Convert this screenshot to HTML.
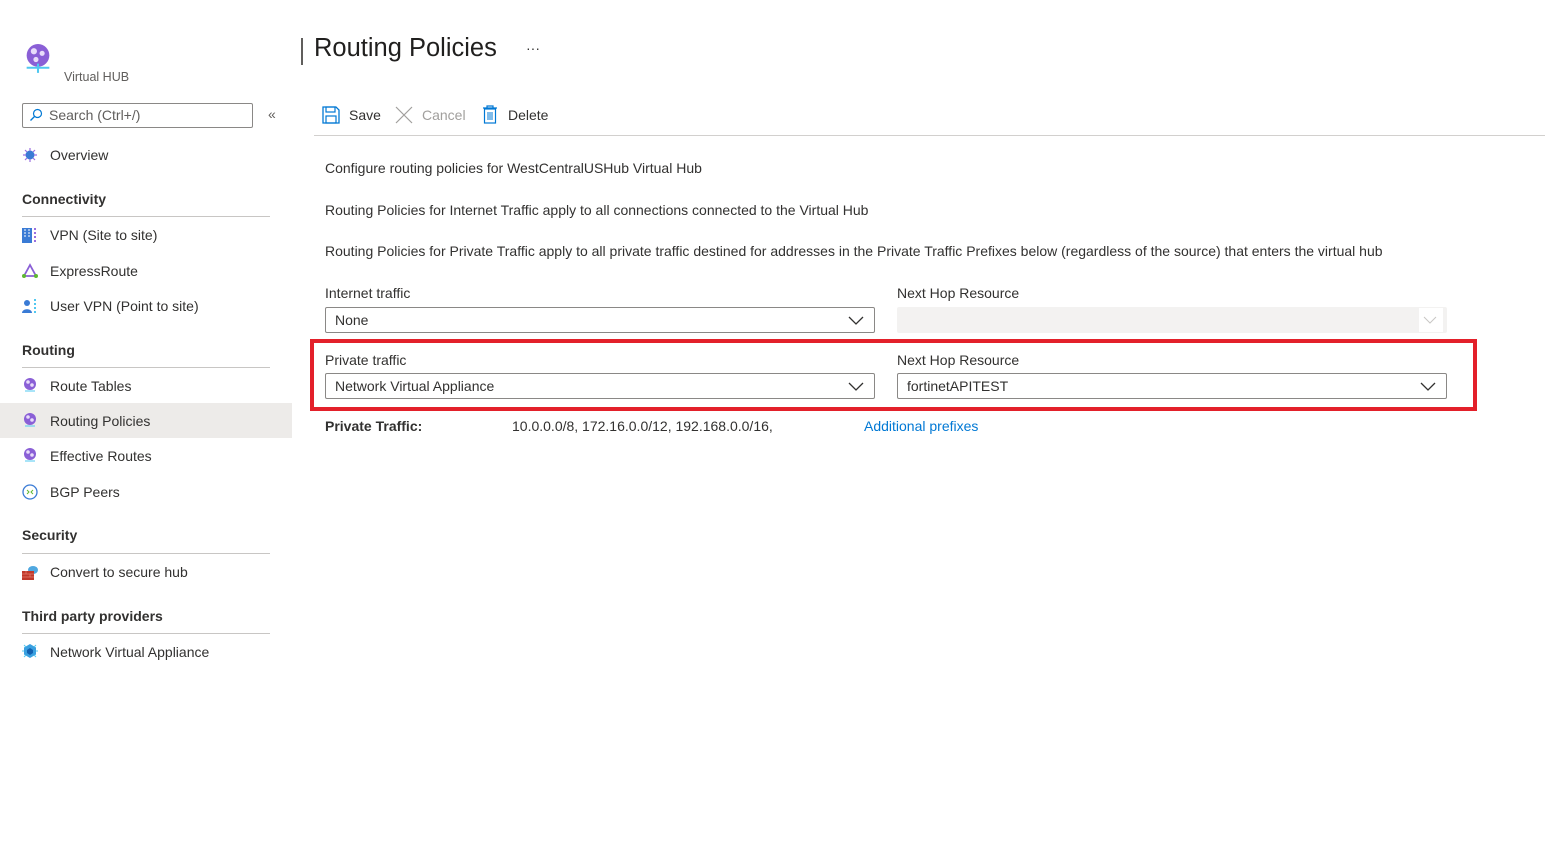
<!DOCTYPE html>
<html><head><meta charset="utf-8"><style>
*{box-sizing:border-box;margin:0;padding:0}
body{width:1545px;height:864px;background:#fff;font-family:"Liberation Sans",sans-serif;font-size:14px;color:#323130;position:relative;overflow:hidden}
.a{position:absolute;white-space:nowrap}
.hdr{font-weight:bold;font-size:14px}
.line{position:absolute;left:22px;width:248px;height:1px;background:#c8c6c4}
.ico{position:absolute;width:16px;height:16px}
.sel{position:absolute;height:26px;border:1px solid #8a8886;border-radius:2px;padding:5px 9px;font-size:14px}
.chev{position:absolute;right:10px;top:6px}
</style></head><body>
<svg class="a" style="left:23px;top:43px" width="30" height="33" viewBox="0 0 28 32"><circle cx="14" cy="12" r="11" fill="#8a5fd6"/><circle cx="10" cy="8" r="3" fill="#e8dcfa"/><circle cx="18" cy="10" r="2.5" fill="#e8dcfa"/><circle cx="12" cy="16" r="2.5" fill="#e8dcfa"/><path d="M3 24h22M14 20v9" stroke="#50c8f0" stroke-width="2"/></svg>
<div class="a" style="left:64px;top:70px;font-size:12.5px;color:#605e5c">Virtual HUB</div>
<div class="a" style="left:22px;top:103px;width:231px;height:25px;border:1px solid #8a8886;border-radius:2px"></div>
<svg class="a" style="left:29px;top:108px" width="14" height="14" viewBox="0 0 14 14"><circle cx="8.5" cy="5.5" r="4" fill="none" stroke="#0078d4" stroke-width="1.2"/><path d="M5.5 8.5L1.5 12.5" stroke="#0078d4" stroke-width="1.3"/></svg>
<div class="a" style="left:49px;top:107px;color:#605e5c">Search (Ctrl+/)</div>
<div class="a" style="left:268px;top:106px;color:#605e5c;font-size:14px">«</div>

<svg class="ico" style="left:22px;top:147px" viewBox="0 0 16 16"><circle cx="8" cy="8" r="4.5" fill="#3a7bd5"/><path d="M1 8h3M12 8h3M8 1v3M8 12v3M3 3l2 2M11 11l2 2M13 3l-2 2M3 13l2-2" stroke="#9a6fe0" stroke-width="1.2"/></svg>
<div class="a" style="left:50px;top:147px">Overview</div>
<div class="a hdr" style="left:22px;top:191px">Connectivity</div><div class="line" style="top:216px"></div>
<svg class="ico" style="left:22px;top:227px" viewBox="0 0 16 16"><rect x="0" y="1" width="10" height="15" fill="#3a7bd5"/><path d="M2 3h2M6 3h2M2 6h2M6 6h2M2 9h2M6 9h2" stroke="#fff"/><path d="M13 1v15" stroke="#9a6fe0" stroke-dasharray="2 2" stroke-width="2"/></svg>
<div class="a" style="left:50px;top:227px">VPN (Site to site)</div>
<svg class="ico" style="left:22px;top:263px" viewBox="0 0 16 16"><path d="M8 2L2 13h12z" fill="none" stroke="#8a5fd6" stroke-width="1.8"/><circle cx="2" cy="13" r="2" fill="#5fb832"/><circle cx="14" cy="13" r="2" fill="#5fb832"/></svg>
<div class="a" style="left:50px;top:263px">ExpressRoute</div>
<svg class="ico" style="left:22px;top:298px" viewBox="0 0 16 16"><circle cx="5" cy="5" r="3" fill="#3a7bd5"/><path d="M0 15c0-5 10-5 10 0z" fill="#3a7bd5"/><path d="M13 1v15" stroke="#50c8f0" stroke-dasharray="2 2" stroke-width="2"/></svg>
<div class="a" style="left:50px;top:298px">User VPN (Point to site)</div>
<div class="a hdr" style="left:22px;top:342px">Routing</div><div class="line" style="top:367px"></div>
<div class="a" style="left:0;top:403px;width:292px;height:35px;background:#edebe9"></div>
<svg class="ico" style="left:22px;top:377px" viewBox="0 0 16 16"><circle cx="8" cy="7" r="6" fill="#8a5fd6"/><circle cx="6" cy="5" r="1.8" fill="#e8dcfa"/><circle cx="10" cy="8" r="1.8" fill="#e8dcfa"/><path d="M3 14h10" stroke="#50c8f0"/></svg>
<div class="a" style="left:50px;top:378px">Route Tables</div>
<svg class="ico" style="left:22px;top:412px" viewBox="0 0 16 16"><circle cx="8" cy="7" r="6" fill="#8a5fd6"/><circle cx="6" cy="5" r="1.8" fill="#e8dcfa"/><circle cx="10" cy="8" r="1.8" fill="#e8dcfa"/><path d="M3 14h10" stroke="#50c8f0"/></svg>
<div class="a" style="left:50px;top:413px">Routing Policies</div>
<svg class="ico" style="left:22px;top:447px" viewBox="0 0 16 16"><circle cx="8" cy="7" r="6" fill="#8a5fd6"/><circle cx="6" cy="5" r="1.8" fill="#e8dcfa"/><circle cx="10" cy="8" r="1.8" fill="#e8dcfa"/><path d="M3 14h10" stroke="#50c8f0"/></svg>
<div class="a" style="left:50px;top:448px">Effective Routes</div>
<svg class="ico" style="left:22px;top:484px" viewBox="0 0 16 16"><circle cx="8" cy="8" r="7" fill="#fff" stroke="#3a7bd5" stroke-width="1.3"/><path d="M5 6l2 2-2 2M11 6l-2 2 2 2" stroke="#5fb832" fill="none"/></svg>
<div class="a" style="left:50px;top:484px">BGP Peers</div>
<div class="a hdr" style="left:22px;top:527px">Security</div><div class="line" style="top:553px"></div>
<svg class="ico" style="left:22px;top:564px" viewBox="0 0 16 16"><ellipse cx="11" cy="6" rx="5" ry="4" fill="#50a8e0"/><rect x="0" y="7" width="12" height="9" fill="#c0392b"/><path d="M0 10h12M0 13h12M4 7v3M8 10v3" stroke="#e67e70" stroke-width=".7"/></svg>
<div class="a" style="left:50px;top:564px">Convert to secure hub</div>
<div class="a hdr" style="left:22px;top:608px">Third party providers</div><div class="line" style="top:633px"></div>
<svg class="ico" style="left:22px;top:643px" viewBox="0 0 16 16"><path d="M8 1l6 3.5v7L8 15l-6-3.5v-7z" fill="#3aa0e0"/><path d="M8 5l3 2v3l-3 2-3-2V7z" fill="#1060b0"/><path d="M0 8h2M14 8h2M2 2l2 2M14 2l-2 2M2 14l2-2M14 14l-2-2" stroke="#50c8f0"/></svg>
<div class="a" style="left:50px;top:644px">Network Virtual Appliance</div>

<div class="a" style="left:301px;top:38px;width:2px;height:27px;background:#605e5c"></div>
<div class="a" style="left:314px;top:34px;font-size:25.5px;color:#201f1e">Routing Policies</div>
<div class="a" style="left:526px;top:40px;font-size:14px;color:#323130">···</div>

<svg class="a" style="left:322px;top:106px" width="18" height="18" viewBox="0 0 18 18"><path d="M1 1h13l3 3v13H1z" fill="none" stroke="#0078d4" stroke-width="1.3"/><rect x="4" y="1" width="9" height="5" fill="none" stroke="#0078d4" stroke-width="1.2"/><rect x="4" y="10" width="10" height="7" fill="none" stroke="#0078d4" stroke-width="1.2"/></svg>
<div class="a" style="left:349px;top:107px">Save</div>
<svg class="a" style="left:395px;top:106px" width="18" height="18" viewBox="0 0 18 18"><path d="M1 1l16 16M17 1L1 17" stroke="#a19f9d" stroke-width="1.2"/></svg>
<div class="a" style="left:422px;top:107px;color:#a19f9d">Cancel</div>
<svg class="a" style="left:482px;top:105px" width="16" height="19" viewBox="0 0 16 19"><path d="M1 3h14M5 3V1h6v2" stroke="#0078d4" fill="none" stroke-width="1.2"/><rect x="2.5" y="4" width="11" height="14" fill="none" stroke="#0078d4" stroke-width="1.2"/><path d="M6 7v8M8 7v8M10 7v8" stroke="#0078d4"/></svg>
<div class="a" style="left:508px;top:107px">Delete</div>
<div class="a" style="left:314px;top:135px;width:1231px;height:1px;background:#d2d0ce"></div>

<div class="a" style="left:325px;top:160px">Configure routing policies for WestCentralUSHub Virtual Hub</div>
<div class="a" style="left:325px;top:202px">Routing Policies for Internet Traffic apply to all connections connected to the Virtual Hub</div>
<div class="a" style="left:325px;top:243px">Routing Policies for Private Traffic apply to all private traffic destined for addresses in the Private Traffic Prefixes below (regardless of the source) that enters the virtual hub</div>

<div class="a" style="left:325px;top:285px">Internet traffic</div>
<div class="sel" style="left:325px;top:307px;width:550px;padding-top:4px">None<svg class="chev" width="16" height="12" viewBox="0 0 16 12"><path d="M1 3l7 7 7-7" fill="none" stroke="#323130" stroke-width="1.3"/></svg></div>
<div class="a" style="left:897px;top:285px">Next Hop Resource</div>
<div class="a" style="left:897px;top:307px;width:550px;height:26px;background:#f3f2f1;border-radius:2px"><div style="position:absolute;right:4px;top:1px;width:24px;height:24px;background:#fff"></div><svg style="position:absolute;right:10px;top:8px" width="14" height="10" viewBox="0 0 14 10"><path d="M1 2l6 6 6-6" fill="none" stroke="#c8c6c4"/></svg></div>

<div class="a" style="left:310px;top:339px;width:1167px;height:72px;border:4px solid #e3202a"></div>
<div class="a" style="left:325px;top:352px">Private traffic</div>
<div class="sel" style="left:325px;top:373px;width:550px;padding-top:4px">Network Virtual Appliance<svg class="chev" width="16" height="12" viewBox="0 0 16 12"><path d="M1 3l7 7 7-7" fill="none" stroke="#323130" stroke-width="1.3"/></svg></div>
<div class="a" style="left:897px;top:352px">Next Hop Resource</div>
<div class="sel" style="left:897px;top:373px;width:550px;padding-top:4px">fortinetAPITEST<svg class="chev" width="16" height="12" viewBox="0 0 16 12"><path d="M1 3l7 7 7-7" fill="none" stroke="#323130" stroke-width="1.3"/></svg></div>

<div class="a" style="left:325px;top:418px;font-weight:bold">Private Traffic:</div>
<div class="a" style="left:512px;top:418px">10.0.0.0/8, 172.16.0.0/12, 192.168.0.0/16,</div>
<div class="a" style="left:864px;top:418px;color:#0078d4">Additional prefixes</div>
</body></html>
